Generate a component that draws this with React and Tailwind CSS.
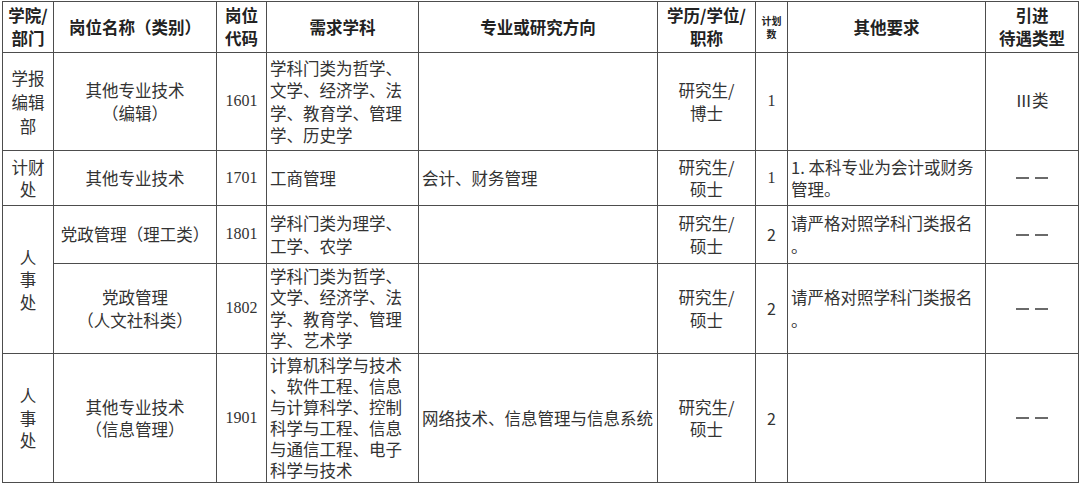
import React from "react";

const cjk = { fontFamily: "'Noto Sans CJK SC', 'Noto Sans', sans-serif" };
const serif = { fontFamily: "'Liberation Serif', 'Noto Sans CJK SC', serif" };

function Lines({ items }) {
  return (
    <>
      {items.map((t, i) => (
        <div key={i} className="whitespace-nowrap">
          {t}
        </div>
      ))}
    </>
  );
}

const td = "border-[1.5px] border-[#4d4d4d] align-middle p-0";
const th = "border-[1.5px] border-[#4d4d4d] align-middle p-0 font-bold text-[#222] text-[16.5px] leading-[23px] text-center";

function Dash() {
  return (
    <div className="flex items-center justify-center gap-[6px]">
      <span className="block w-[13px] h-[2px] bg-[#6a6a6a]"></span>
      <span className="block w-[13px] h-[2px] bg-[#6a6a6a]"></span>
    </div>
  );
}

export default function App() {
  const grad = <Lines items={["研究生/", "硕士"]} />;
  return (
    <div className="w-[1080px] h-[485px] bg-white overflow-hidden pt-[1px] pl-[2px]" style={cjk}>
      <table className="table-fixed border-collapse w-[1076px] text-[#333] text-[16.5px] leading-[22.5px]">
        <colgroup>
          <col className="w-[51px]" />
          <col className="w-[163px]" />
          <col className="w-[50px]" />
          <col className="w-[152px]" />
          <col className="w-[239px]" />
          <col className="w-[98px]" />
          <col className="w-[32px]" />
          <col className="w-[198px]" />
          <col className="w-[93px]" />
        </colgroup>
        <thead>
          <tr className="h-[51px]">
            <th className={th}>
              <Lines items={["学院/", "部门"]} />
            </th>
            <th className={th}>岗位名称（类别）</th>
            <th className={th}>
              <Lines items={["岗位", "代码"]} />
            </th>
            <th className={th}>需求学科</th>
            <th className={th}>专业或研究方向</th>
            <th className={th}>
              <Lines items={["学历/学位/", "职称"]} />
            </th>
            <th className={`${th} !text-[10px] !leading-[13px]`}>
              <Lines items={["计划", "数"]} />
            </th>
            <th className={th}>其他要求</th>
            <th className={th}>
              <Lines items={["引进", "待遇类型"]} />
            </th>
          </tr>
        </thead>
        <tbody>
          <tr className="h-[98px]">
            <td className={`${td} text-center leading-[24px]`}>
              <Lines items={["学报", "编辑", "部"]} />
            </td>
            <td className={`${td} text-center`}>
              <Lines items={["其他专业技术", "（编辑）"]} />
            </td>
            <td className={`${td} text-center text-[16px]`} style={serif}>1601</td>
            <td className={`${td} pl-[3px]`}>
              <Lines items={["学科门类为哲学、", "文学、经济学、法", "学、教育学、管理", "学、历史学"]} />
            </td>
            <td className={td}></td>
            <td className={`${td} text-center`}>
              <Lines items={["研究生/", "博士"]} />
            </td>
            <td className={`${td} text-center text-[16px]`} style={serif}>1</td>
            <td className={td}></td>
            <td className={`${td} text-center`}>
              <span style={serif}>Ⅲ</span>类
            </td>
          </tr>
          <tr className="h-[55px]">
            <td className={`${td} text-center`}>
              <Lines items={["计财", "处"]} />
            </td>
            <td className={`${td} text-center`}>其他专业技术</td>
            <td className={`${td} text-center text-[16px]`} style={serif}>1701</td>
            <td className={`${td} pl-[3px]`}>工商管理</td>
            <td className={`${td} pl-[3px]`}>会计、财务管理</td>
            <td className={`${td} text-center`}>{grad}</td>
            <td className={`${td} text-center text-[16px]`} style={serif}>1</td>
            <td className={`${td} pl-[3px]`}>
              <Lines items={["1. 本科专业为会计或财务", "管理。"]} />
            </td>
            <td className={td}>
              <Dash />
            </td>
          </tr>
          <tr className="h-[58px]">
            <td rowSpan={2} className={`${td} text-center`}>
              <Lines items={["人", "事", "处"]} />
            </td>
            <td className={`${td} text-center`}>党政管理（理工类）</td>
            <td className={`${td} text-center text-[16px]`} style={serif}>1801</td>
            <td className={`${td} pl-[3px]`}>
              <Lines items={["学科门类为理学、", "工学、农学"]} />
            </td>
            <td className={td}></td>
            <td className={`${td} text-center`}>{grad}</td>
            <td className={`${td} text-center text-[16px]`}>2</td>
            <td className={`${td} pl-[3px]`}>
              <Lines items={["请严格对照学科门类报名", "。"]} />
            </td>
            <td className={td}>
              <Dash />
            </td>
          </tr>
          <tr className="h-[90px]">
            <td className={`${td} text-center`}>
              <Lines items={["党政管理", "（人文社科类）"]} />
            </td>
            <td className={`${td} text-center text-[16px]`} style={serif}>1802</td>
            <td className={`${td} pl-[3px] leading-[21.5px]`}>
              <Lines items={["学科门类为哲学、", "文学、经济学、法", "学、教育学、管理", "学、艺术学"]} />
            </td>
            <td className={td}></td>
            <td className={`${td} text-center`}>{grad}</td>
            <td className={`${td} text-center text-[16px]`}>2</td>
            <td className={`${td} pl-[3px]`}>
              <Lines items={["请严格对照学科门类报名", "。"]} />
            </td>
            <td className={td}>
              <Dash />
            </td>
          </tr>
          <tr className="h-[129px]">
            <td className={`${td} text-center`}>
              <Lines items={["人", "事", "处"]} />
            </td>
            <td className={`${td} text-center`}>
              <Lines items={["其他专业技术", "（信息管理）"]} />
            </td>
            <td className={`${td} text-center text-[16px]`} style={serif}>1901</td>
            <td className={`${td} pl-[3px] leading-[21px]`}>
              <Lines
                items={[
                  "计算机科学与技术",
                  "、软件工程、信息",
                  "与计算科学、控制",
                  "科学与工程、信息",
                  "与通信工程、电子",
                  "科学与技术",
                ]}
              />
            </td>
            <td className={`${td} pl-[3px]`}>网络技术、信息管理与信息系统</td>
            <td className={`${td} text-center`}>{grad}</td>
            <td className={`${td} text-center text-[16px]`}>2</td>
            <td className={td}></td>
            <td className={td}>
              <Dash />
            </td>
          </tr>
        </tbody>
      </table>
    </div>
  );
}
